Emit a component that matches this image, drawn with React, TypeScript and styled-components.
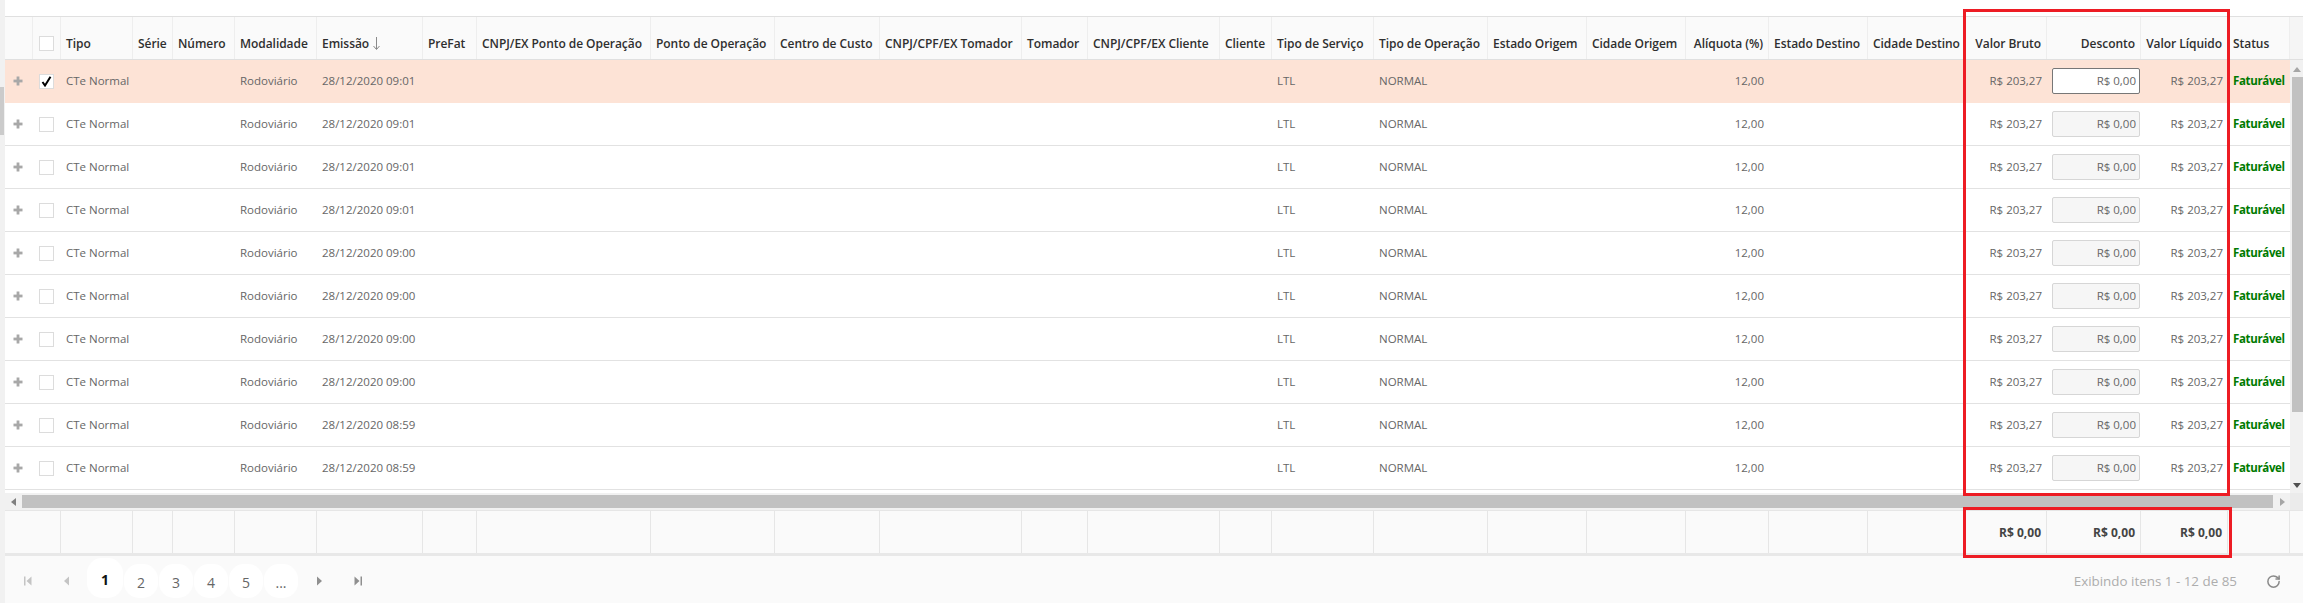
import React from "react";
import styled, { createGlobalStyle } from "styled-components";
import { RotateCw } from "lucide-react";

const Global = createGlobalStyle`
  html, body { margin: 0; padding: 0; height: 603px; overflow: hidden; background: #fff; }
  body { font-family: "Open Sans", "Noto Sans", "Liberation Sans", sans-serif; }
  * { box-sizing: border-box; }
`;

const WIDTHS = [28, 28, 72, 40, 62, 82, 106, 54, 174, 124, 105, 142, 66, 132, 52, 102, 114, 99, 99, 83, 99, 98, 81, 94, 87, 62];
const COLUMNS = WIDTHS.map((w) => `${w}px`).join(" ");

type Col = { title: string; right?: boolean; sort?: boolean };
const HEAD: Col[] = [
  { title: "Tipo" }, { title: "Série" }, { title: "Número" }, { title: "Modalidade" },
  { title: "Emissão", sort: true }, { title: "PreFat" }, { title: "CNPJ/EX Ponto de Operação" },
  { title: "Ponto de Operação" }, { title: "Centro de Custo" }, { title: "CNPJ/CPF/EX Tomador" },
  { title: "Tomador" }, { title: "CNPJ/CPF/EX Cliente" }, { title: "Cliente" }, { title: "Tipo de Serviço" },
  { title: "Tipo de Operação" }, { title: "Estado Origem" }, { title: "Cidade Origem" },
  { title: "Alíquota (%)", right: true }, { title: "Estado Destino" }, { title: "Cidade Destino" },
  { title: "Valor Bruto", right: true }, { title: "Desconto", right: true }, { title: "Valor Líquido", right: true },
  { title: "Status" },
];

const TIMES = ["09:01", "09:01", "09:01", "09:01", "09:00", "09:00", "09:00", "09:00", "08:59", "08:59"];

const Page = styled.div`
  position: relative;
  width: 2303px;
  height: 603px;
  display: flex;
  overflow: hidden;
  color: #666;
  font-size: 11.5px;
`;
const PageScroll = styled.div`
  width: 5px;
  flex: none;
  background: #f1f1f1;
  padding-top: 87px;
`;
const PageThumb = styled.div`
  width: 4px;
  height: 48px;
  background: #cbcbcb;
`;
const Main = styled.div`
  flex: 1;
  min-width: 0;
  display: flex;
  flex-direction: column;
  padding-top: 16px;
`;
const HeaderRow = styled.div`
  display: grid;
  grid-template-columns: ${COLUMNS} 13px;
  height: 44px;
  background: #fafafa;
  border-top: 1px solid #e0e0e0;
  border-bottom: 1px solid #e0e0e0;
`;
const HeadCell = styled.div<{ $right?: boolean }>`
  display: flex;
  align-items: center;
  justify-content: ${(p) => (p.$right ? "flex-end" : "flex-start")};
  gap: 4px;
  padding: 10px 5px 0;
  border-right: 1px solid #eeeeee;
  color: #2f2f2f;
  font-weight: 600;
  font-size: 12px;
  letter-spacing: -0.05px;
  white-space: nowrap;
  overflow: hidden;
`;
const CheckCell = styled.div`
  display: flex;
  align-items: center;
  justify-content: center;
  padding-right: 1px;
`;
const HeadCheckCell = styled(CheckCell)`
  border-right: 1px solid #eeeeee;
  padding-top: 10px;
`;
const CornerCell = styled.div`
  background: #f5f5f5;
`;
const BodyArea = styled.div`
  display: flex;
  height: 433px;
`;
const Rows = styled.div`
  width: 2285px;
  flex: none;
`;
const Row = styled.div<{ $selected?: boolean }>`
  display: grid;
  grid-template-columns: ${COLUMNS};
  height: 43px;
  align-items: center;
  background: ${(p) => (p.$selected ? "#fde3d6" : "#fff")};
  border-bottom: 1px solid ${(p) => (p.$selected ? "#fde3d6" : "#e2e2e2")};
`;
const Cell = styled.div<{ $right?: boolean }>`
  padding: 0 5px 2px;
  text-align: ${(p) => (p.$right ? "right" : "left")};
  white-space: nowrap;
  overflow: hidden;
`;
const StatusCell = styled(Cell)`
  color: #007a00;
  font-weight: 700;
  letter-spacing: -0.35px;
`;
const PlusCell = styled.div`
  display: flex;
  justify-content: center;
  padding-right: 2px;
  color: #a8a8a8;
`;
const Box = styled.div`
  width: 15px;
  height: 15px;
  background: #fff;
  border: 1px solid #dcdcdc;
  display: flex;
  align-items: center;
  justify-content: center;
`;
const MoneyInput = styled.input<{ $active?: boolean }>`
  display: block;
  width: 88px;
  height: 26px;
  padding: 0 3px 2px;
  text-align: right;
  font: inherit;
  color: #666;
  border-radius: 2px;
  background: ${(p) => (p.$active ? "#fff" : "#f6f6f6")};
  border: 1px solid ${(p) => (p.$active ? "#777" : "#d6d6d6")};
  outline: none;
`;
const InputCell = styled.div`
  padding-left: 5px;
`;
const VScroll = styled.div`
  flex: 1;
  background: #f1f1f1;
  display: flex;
  flex-direction: column;
  align-items: flex-end;
`;
const VArrow = styled.div`
  width: 12px;
  height: 17px;
  display: flex;
  align-items: center;
  justify-content: center;
  flex: none;
`;
const VThumb = styled.div`
  width: 11px;
  height: 335px;
  background: #c1c1c1;
`;
const VGap = styled.div`
  flex: 1;
`;
const HScroll = styled.div`
  height: 17px;
  display: flex;
  align-items: center;
  background: #f1f1f1;
`;
const HArrow = styled.div`
  width: 17px;
  height: 17px;
  flex: none;
  display: flex;
  align-items: center;
  justify-content: center;
`;
const HThumb = styled.div`
  width: 2251px;
  height: 13px;
  background: #c1c1c1;
`;
const HGap = styled.div`
  flex: 1;
`;
const ScrollCorner = styled.div`
  width: 13px;
  height: 17px;
  background: #ebebeb;
  flex: none;
`;
const FooterRow = styled.div`
  display: grid;
  grid-template-columns: 56px ${WIDTHS.slice(2).map((w) => `${w}px`).join(" ")} 13px;
  height: 46px;
  background: #fafafa;
  border-top: 1px solid #e6e6e6;
  border-bottom: 3px solid #e8e8e8;
`;
const FootCell = styled.div`
  display: flex;
  align-items: center;
  justify-content: flex-end;
  padding: 0 5px;
  border-right: 1px solid #e6e6e6;
  color: #444;
  font-weight: 700;
  font-size: 12px;
  white-space: nowrap;
`;
const LastFootCell = styled.div``;
const Pager = styled.div`
  height: 47px;
  background: #fafafa;
  display: flex;
  align-items: flex-end;
  padding-bottom: 5px;
`;
const PagerIcon = styled.div<{ $w: number }>`
  width: ${(p) => p.$w}px;
  height: 34px;
  flex: none;
  display: flex;
  align-items: center;
  justify-content: center;
`;
const Numbers = styled.div`
  display: flex;
  align-items: flex-end;
  gap: 1px;
  margin-left: 6px;
`;
const PageNum = styled.div<{ $active?: boolean }>`
  width: ${(p) => (p.$active ? 36 : 34)}px;
  height: ${(p) => (p.$active ? 40 : 34)}px;
  display: flex;
  align-items: center;
  justify-content: center;
  background: #fff;
  border-radius: 15px;
  color: ${(p) => (p.$active ? "#111" : "#666")};
  font-weight: ${(p) => (p.$active ? 700 : 400)};
  font-size: 14px;
  padding-top: 2px;
`;
const PagerInfo = styled.div`
  margin-left: auto;
  height: 34px;
  display: flex;
  align-items: center;
  gap: 29px;
  padding-right: 22px;
  color: #adadad;
  font-size: 13.4px;
`;
const ReloadIcon = styled(RotateCw)`
  color: #8a8a8a;
  flex: none;
`;
const Highlight = styled.div<{ $x: number; $y: number; $w: number; $h: number }>`
  position: absolute;
  left: ${(p) => p.$x}px;
  top: ${(p) => p.$y}px;
  width: ${(p) => p.$w}px;
  height: ${(p) => p.$h}px;
  border: 3px solid #ed1c24;
  pointer-events: none;
`;

const Tri = ({ dir, color = "#7f7f7f", size = 8 }: { dir: "up" | "down" | "left" | "right"; color?: string; size?: number }) => {
  const pts = { up: "0,7 4,2 8,7", down: "0,2 8,2 4,7", left: "6,0 6,8 1,4", right: "2,0 2,8 7,4" }[dir];
  return (
    <svg width={size} height={size} viewBox="0 0 8 8">
      <polygon points={pts} fill={color} />
    </svg>
  );
};

const PagerEnd = ({ dir, color }: { dir: "left" | "right"; color: string }) => (
  <svg width="8" height="10" viewBox="0 0 8 10">
    {dir === "left" ? (
      <>
        <rect x="0" y="0.5" width="1.5" height="9" fill={color} />
        <polygon points="7.5,0.5 7.5,9.5 2.5,5" fill={color} />
      </>
    ) : (
      <>
        <rect x="6.5" y="0.5" width="1.5" height="9" fill={color} />
        <polygon points="0.5,0.5 0.5,9.5 5.5,5" fill={color} />
      </>
    )}
  </svg>
);

const PagerArrow = ({ dir, color }: { dir: "left" | "right"; color: string }) => (
  <svg width="7" height="10" viewBox="0 0 7 10">
    <polygon points={dir === "left" ? "6,0.5 6,9.5 1,5" : "1,0.5 1,9.5 6,5"} fill={color} />
  </svg>
);

const Plus = () => (
  <svg width="10" height="10" viewBox="0 0 10 10">
    <rect x="3.6" y="0.5" width="2.8" height="9" fill="currentColor" />
    <rect x="0.5" y="3.6" width="9" height="2.8" fill="currentColor" />
  </svg>
);

const Check = () => (
  <svg width="11" height="11" viewBox="0 0 11 11">
    <path d="M1.5 6 L4 9.5 L9.5 0.8" fill="none" stroke="#000" strokeWidth="2" />
  </svg>
);

const SortDown = () => (
  <svg width="7" height="13" viewBox="0 0 7 13">
    <path d="M3.5 0 V12 M0.5 9 L3.5 12.5 L6.5 9" fill="none" stroke="#8a8a8a" strokeWidth="1" />
  </svg>
);

const GridRow = ({ time, selected }: { time: string; selected: boolean }) => (
  <Row $selected={selected}>
    <PlusCell><Plus /></PlusCell>
    <CheckCell><Box>{selected && <Check />}</Box></CheckCell>
    <Cell>CTe Normal</Cell>
    <Cell />
    <Cell />
    <Cell>Rodoviário</Cell>
    <Cell>28/12/2020 {time}</Cell>
    <Cell />
    <Cell />
    <Cell />
    <Cell />
    <Cell />
    <Cell />
    <Cell />
    <Cell />
    <Cell>LTL</Cell>
    <Cell>NORMAL</Cell>
    <Cell />
    <Cell />
    <Cell $right>12,00</Cell>
    <Cell />
    <Cell />
    <Cell $right>R$ 203,27</Cell>
    <InputCell><MoneyInput $active={selected} readOnly value="R$ 0,00" /></InputCell>
    <Cell $right>R$ 203,27</Cell>
    <StatusCell>Faturável</StatusCell>
  </Row>
);

export default function App() {
  const footerColumns = HEAD.length;
  return (
    <Page>
      <Global />
      <PageScroll><PageThumb /></PageScroll>
      <Main>
        <HeaderRow>
          <HeadCheckCell />
          <HeadCheckCell><Box /></HeadCheckCell>
          {HEAD.map((c) => (
            <HeadCell key={c.title} $right={c.right}>
              {c.title}
              {c.sort && <SortDown />}
            </HeadCell>
          ))}
          <CornerCell />
        </HeaderRow>
        <BodyArea>
          <Rows>
            {TIMES.map((t, i) => (
              <GridRow key={i} time={t} selected={i === 0} />
            ))}
          </Rows>
          <VScroll>
            <VArrow><Tri dir="up" color="#a6a6a6" /></VArrow>
            <VThumb />
            <VGap />
            <VArrow><Tri dir="down" color="#505050" /></VArrow>
          </VScroll>
        </BodyArea>
        <HScroll>
          <HArrow><Tri dir="left" color="#7f7f7f" /></HArrow>
          <HThumb />
          <HGap />
          <HArrow><Tri dir="right" color="#a6a6a6" /></HArrow>
          <ScrollCorner />
        </HScroll>
        <FooterRow>
          <FootCell />
          {Array.from({ length: footerColumns }).map((_, i) => (
            <FootCell key={i}>{i >= 20 && i <= 22 ? "R$ 0,00" : ""}</FootCell>
          ))}
          <LastFootCell />
        </FooterRow>
        <Pager>
          <PagerIcon $w={46}><PagerEnd dir="left" color="#c4c4c4" /></PagerIcon>
          <PagerIcon $w={30}><PagerArrow dir="left" color="#c4c4c4" /></PagerIcon>
          <Numbers>
            <PageNum $active>1</PageNum>
            {["2", "3", "4", "5", "..."].map((n) => (
              <PageNum key={n}>{n}</PageNum>
            ))}
          </Numbers>
          <PagerIcon $w={42}><PagerArrow dir="right" color="#8f8f8f" /></PagerIcon>
          <PagerIcon $w={36}><PagerEnd dir="right" color="#8f8f8f" /></PagerIcon>
          <PagerInfo>
            Exibindo itens 1 - 12 de 85
            <ReloadIcon size={15} strokeWidth={2.4} />
          </PagerInfo>
        </Pager>
      </Main>
      <Highlight $x={1963} $y={9} $w={267} $h={487} />
      <Highlight $x={1963} $y={507} $w={269} $h={51} />
    </Page>
  );
}
